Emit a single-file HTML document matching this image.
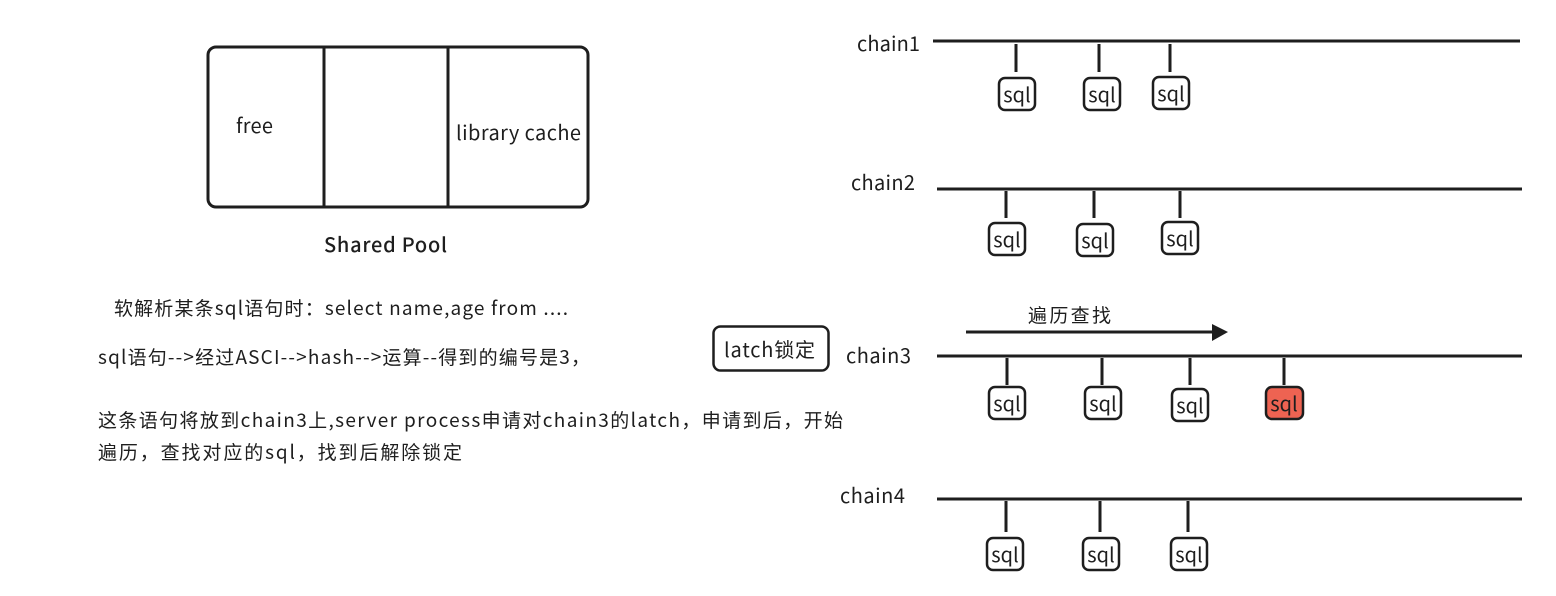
<!DOCTYPE html>
<html><head><meta charset="utf-8"><style>
html,body{margin:0;padding:0;background:#fff;width:1556px;height:596px;overflow:hidden}
text{font-family:"Noto Sans CJK SC","Liberation Sans",sans-serif;fill:#1e1e1e}
</style></head><body>
<svg width="1556" height="596" viewBox="0 0 1556 596" xmlns="http://www.w3.org/2000/svg">
<g fill="none" stroke="#1e1e1e" stroke-width="3">
<rect x="208" y="47" width="380" height="160" rx="8"/>
<line x1="324" y1="47" x2="324" y2="207"/>
<line x1="448" y1="47" x2="448" y2="207"/>
<rect x="713.5" y="326.5" width="115" height="44" rx="7" stroke-width="2.5"/>
<line x1="933" y1="41" x2="1520" y2="41"/>
<line x1="937" y1="189" x2="1522" y2="189"/>
<line x1="937" y1="356" x2="1522" y2="356"/>
<line x1="937" y1="499" x2="1522" y2="499"/>
<line x1="966" y1="332" x2="1214" y2="332"/>
<line x1="1016" y1="44" x2="1016" y2="72"/><line x1="1099" y1="44" x2="1099" y2="72"/><line x1="1170" y1="44" x2="1170" y2="72"/>
<line x1="1006" y1="191" x2="1006" y2="218"/><line x1="1094" y1="191" x2="1094" y2="218"/><line x1="1180" y1="191" x2="1180" y2="218"/>
<line x1="1007" y1="358" x2="1007" y2="385"/><line x1="1102" y1="358" x2="1102" y2="385"/><line x1="1190" y1="358" x2="1190" y2="385"/><line x1="1284" y1="358" x2="1284" y2="385"/>
<line x1="1006" y1="501" x2="1006" y2="532"/><line x1="1100" y1="501" x2="1100" y2="532"/><line x1="1188" y1="501" x2="1188" y2="532"/>
<g stroke-width="2.5">
<rect x="999" y="78" width="36" height="32" rx="6"/><rect x="1084" y="78" width="36" height="32" rx="6"/><rect x="1153" y="77" width="36" height="32" rx="6"/>
<rect x="989" y="223" width="36" height="32" rx="6"/><rect x="1077" y="224" width="36" height="32" rx="6"/><rect x="1162" y="222" width="36" height="32" rx="6"/>
<rect x="989" y="387" width="36" height="32" rx="6"/><rect x="1085" y="387" width="36" height="32" rx="6"/><rect x="1172" y="389" width="36" height="32" rx="6"/>
<rect x="1266" y="387" width="37" height="32" rx="6" fill="#ee6352"/>
<rect x="987" y="538" width="36" height="32" rx="6"/><rect x="1083" y="538" width="36" height="32" rx="6"/><rect x="1171" y="538" width="36" height="32" rx="6"/>
</g></g>
<polygon points="1212,324 1228,332 1212,341" fill="#1e1e1e"/>
<g font-size="20">
<text x="1017" y="102" text-anchor="middle">sql</text><text x="1102" y="102" text-anchor="middle">sql</text><text x="1171" y="101" text-anchor="middle">sql</text>
<text x="1007" y="247" text-anchor="middle">sql</text><text x="1095" y="248" text-anchor="middle">sql</text><text x="1180" y="246" text-anchor="middle">sql</text>
<text x="1007" y="411" text-anchor="middle">sql</text><text x="1103" y="411" text-anchor="middle">sql</text><text x="1190" y="413" text-anchor="middle">sql</text><text x="1284" y="411" text-anchor="middle">sql</text>
<text x="1005" y="562" text-anchor="middle">sql</text><text x="1101" y="562" text-anchor="middle">sql</text><text x="1189" y="562" text-anchor="middle">sql</text>
<text x="857" y="51" textLength="63">chain1</text>
<text x="851" y="190" textLength="64">chain2</text>
<text x="846" y="363" textLength="65">chain3</text>
<text x="840" y="503" textLength="65">chain4</text>
<text x="1028" y="322" font-size="19" textLength="83">遍历查找</text>
<text x="724" y="357" textLength="91">latch锁定</text>
<text x="236" y="133" textLength="37">free</text>
<text x="456" y="140" textLength="125">library cache</text>
<text x="324" y="252" font-weight="500" textLength="123">Shared  Pool</text>
<g font-size="19">
<text x="114" y="315" textLength="454">软解析某条sql语句时：select name,age from ....</text>
<text x="98" y="364" textLength="492">sql语句--&gt;经过ASCI--&gt;hash--&gt;运算--得到的编号是3，</text>
<text x="98" y="427" textLength="745">这条语句将放到chain3上,server process申请对chain3的latch，申请到后，开始</text>
<text x="98" y="459" textLength="364">遍历，查找对应的sql，找到后解除锁定</text>
</g>
</g>
</svg>
</body></html>
